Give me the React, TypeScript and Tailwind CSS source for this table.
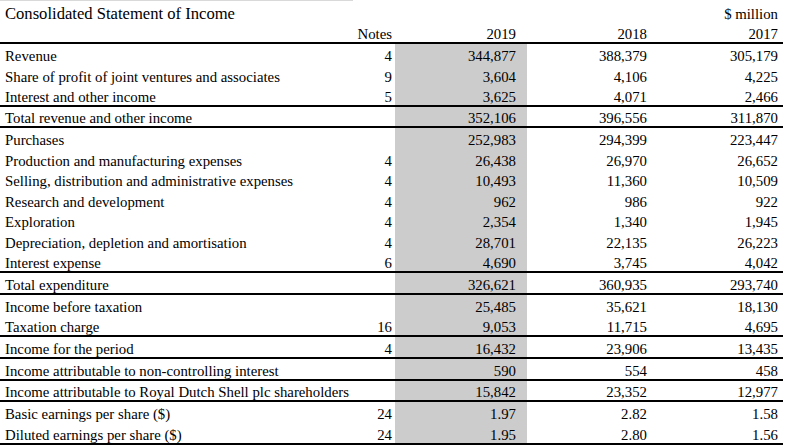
import React from 'react';

type Row = {
  label: string;
  note?: string;
  values: [string, string, string];
  h: number;
  line?: boolean;
};

// heights include the 2px rule underneath when `line` is set
const rows: Row[] = [
  { label: 'Revenue', note: '4', values: ['344,877', '388,379', '305,179'], h: 20 },
  { label: 'Share of profit of joint ventures and associates', note: '9', values: ['3,604', '4,106', '4,225'], h: 21 },
  { label: 'Interest and other income', note: '5', values: ['3,625', '4,071', '2,466'], h: 22, line: true },
  { label: 'Total revenue and other income', values: ['352,106', '396,556', '311,870'], h: 21, line: true },
  { label: 'Purchases', values: ['252,983', '294,399', '223,447'], h: 20 },
  { label: 'Production and manufacturing expenses', note: '4', values: ['26,438', '26,970', '26,652'], h: 21 },
  { label: 'Selling, distribution and administrative expenses', note: '4', values: ['10,493', '11,360', '10,509'], h: 20 },
  { label: 'Research and development', note: '4', values: ['962', '986', '922'], h: 21 },
  { label: 'Exploration', note: '4', values: ['2,354', '1,340', '1,945'], h: 20 },
  { label: 'Depreciation, depletion and amortisation', note: '4', values: ['28,701', '22,135', '26,223'], h: 21 },
  { label: 'Interest expense', note: '6', values: ['4,690', '3,745', '4,042'], h: 22, line: true },
  { label: 'Total expenditure', values: ['326,621', '360,935', '293,740'], h: 22, line: true },
  { label: 'Income before taxation', values: ['25,485', '35,621', '18,130'], h: 20 },
  { label: 'Taxation charge', note: '16', values: ['9,053', '11,715', '4,695'], h: 22, line: true },
  { label: 'Income for the period', note: '4', values: ['16,432', '23,906', '13,435'], h: 22, line: true },
  { label: 'Income attributable to non-controlling interest', values: ['590', '554', '458'], h: 22, line: true },
  { label: 'Income attributable to Royal Dutch Shell plc shareholders', values: ['15,842', '23,352', '12,977'], h: 21, line: true },
  { label: 'Basic earnings per share ($)', note: '24', values: ['1.97', '2.82', '1.58'], h: 20 },
  { label: 'Diluted earnings per share ($)', note: '24', values: ['1.95', '2.80', '1.56'], h: 23, line: true },
];

const cols = 'grid grid-cols-[333px_62px_132px_131px_125px]';

export default function App() {
  return (
    <div className="w-[786px] h-[448px] bg-white text-black font-['Liberation_Serif',serif] text-[14.8px] leading-[16px] overflow-hidden">
      <div className="h-[1px] w-[353px] bg-[#d9d9d9]" />

      {/* title row */}
      <div className={`${cols} h-[21px] w-[783px]`}>
        <div className="col-span-4 flex items-end pl-[5px] text-[16.6px] leading-[17px]">Consolidated Statement of Income</div>
        <div className="flex items-end justify-end pr-[5px]">$ million</div>
      </div>

      {/* column headings */}
      <div className={`${cols} h-[22px] w-[783px] border-b-2 border-black`}>
        <div />
        <div className="flex items-end justify-end pr-[3px]">Notes</div>
        <div className="flex items-end justify-end pr-[11px]">2019</div>
        <div className="flex items-end justify-end pr-[11px]">2018</div>
        <div className="flex items-end justify-end pr-[5px]">2017</div>
      </div>

      {rows.map((r) => (
        <div
          key={r.label}
          className={`${cols} w-[783px] ${r.line ? 'border-b-2 border-black' : ''}`}
          style={{ height: r.h }}
        >
          <div className="flex items-end pl-[5px] whitespace-nowrap">{r.label}</div>
          <div className="flex items-end justify-end pr-[3px]">{r.note}</div>
          <div className="flex items-end justify-end pr-[11px] bg-[#cccccc]">{r.values[0]}</div>
          <div className="flex items-end justify-end pr-[11px]">{r.values[1]}</div>
          <div className="flex items-end justify-end pr-[5px]">{r.values[2]}</div>
        </div>
      ))}
    </div>
  );
}
